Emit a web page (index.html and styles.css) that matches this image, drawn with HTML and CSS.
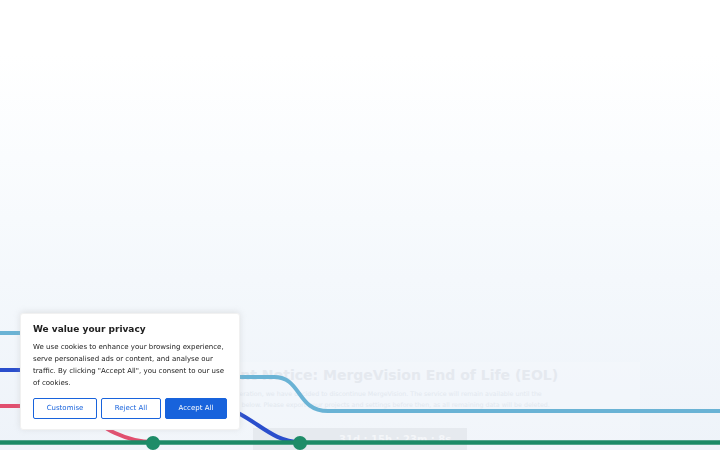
FILE: index.html
```html
<!DOCTYPE html>
<html lang="en">
<head>
<meta charset="utf-8">
<title>MergeVision</title>
<link rel="stylesheet" href="styles.css">
</head>
<body>
<main class="hero">
  <svg class="branches" width="720" height="450" viewBox="0 0 720 450" aria-hidden="true">
    <path class="br br-sky" d="M0 333 H90 C140 333 150 377 200 377 H274 C302 377 296 411 328 411 H720"/>
    <path class="br br-blue" d="M0 370 H150 C195 370 210 398 240 414 C262 426 276 442 300 442"/>
    <path class="br br-pink" d="M0 406 H50 C85 406 95 424 115 433 C128 439 138 442 153 442"/>
    <path class="br br-green" d="M0 442.5 H720"/>
    <circle class="node" cx="153" cy="443" r="7"/>
    <circle class="node" cx="300" cy="443" r="7"/>
  </svg>

  <section class="notice">
    <h1 class="notice-title">Important Notice: MergeVision End of Life (EOL)</h1>
    <p class="notice-text">After careful consideration, we have decided to discontinue MergeVision. The service will remain available until the<br>shutdown date shown below. Please export your projects and settings before then, as all remaining data will be deleted.</p>
    <div class="countdown">31d : 15h : 23m : 8s</div>
  </section>
</main>

<div class="cookie" role="dialog" aria-label="Cookie consent">
  <p class="cookie-title">We value your privacy</p>
  <p class="cookie-text">We use cookies to enhance your browsing experience, serve personalised ads or content, and analyse our traffic. By clicking "Accept All", you consent to our use of cookies.</p>
  <div class="cookie-actions">
    <button class="btn btn-outline">Customise</button>
    <button class="btn btn-outline">Reject All</button>
    <button class="btn btn-solid">Accept All</button>
  </div>
</div>
</body>
</html>
```
FILE: styles.css
```css
html, body {
  margin: 0;
  padding: 0;
}

body {
  width: 720px;
  height: 450px;
  overflow: hidden;
  font-family: "DejaVu Sans", "Liberation Sans", sans-serif;
  background: linear-gradient(180deg, #ffffff 0%, #ffffff 12%, #fafcfe 35%, #f4f8fc 62%, #eef3f9 100%);
}

.hero {
  position: relative;
  height: 450px;
  display: flex;
  flex-direction: column;
  align-items: center;
  justify-content: flex-end;
}

/* decorative branch lines drawn over the hero */
.branches {
  position: absolute;
  inset: 0;
  z-index: 2;
  pointer-events: none;
}

.br {
  fill: none;
  stroke-width: 4;
}

.br-sky { stroke: #6ab3d5; }
.br-blue { stroke: #2a4ecc; }
.br-pink { stroke: #e14f6f; }
.br-green { stroke: #1c8a66; stroke-width: 4.5; }

.node { fill: #1e8c68; }

.notice {
  width: 560px;
  margin-bottom: -8px;
  padding-top: 6px;
  display: flex;
  flex-direction: column;
  align-items: center;
  background: rgba(255, 255, 255, 0.18);
  z-index: 1;
}

.notice-title {
  margin: 0;
  padding-left: 16px;
  font-size: 14px;
  line-height: 14px;
  font-weight: 700;
  color: #e5e9ef;
  white-space: nowrap;
}

.notice-text {
  margin: 5.5px 0 0;
  font-size: 6.3px;
  line-height: 11px;
  color: #e2e8ef;
  text-align: center;
  white-space: nowrap;
}

.countdown {
  margin-top: 18.5px;
  width: 214px;
  height: 30px;
  box-sizing: border-box;
  padding: 6px 8px 0 86px;
  background: #e6eaef;
  color: #f4f6f9;
  font-size: 10px;
  font-weight: 700;
  line-height: 12px;
  white-space: nowrap;
}

/* cookie consent banner */
.cookie {
  position: fixed;
  left: 20px;
  bottom: 20px;
  z-index: 10;
  width: 220px;
  box-sizing: border-box;
  padding: 10px 12px 10px;
  background: #ffffff;
  border: 1px solid #f1f1f1;
  border-radius: 3px;
  box-shadow: 0 -1px 6px rgba(172, 171, 171, 0.3);
  color: #212121;
}

.cookie-title {
  margin: 0 0 7px;
  font-size: 9px;
  line-height: 10px;
  font-weight: 700;
}

.cookie-text {
  margin: 0;
  font-size: 7px;
  line-height: 12px;
  color: #212121;
}

.cookie-actions {
  margin-top: 9px;
  display: flex;
  gap: 4px;
}

.btn {
  flex: 1 1 auto;
  padding: 4px 0;
  border: 1px solid #1863dc;
  border-radius: 2px;
  font-family: inherit;
  font-size: 7px;
  line-height: 11px;
  cursor: pointer;
}

.btn-outline {
  background: #ffffff;
  color: #1863dc;
}

.btn-solid {
  background: #1863dc;
  color: #ffffff;
}
```
